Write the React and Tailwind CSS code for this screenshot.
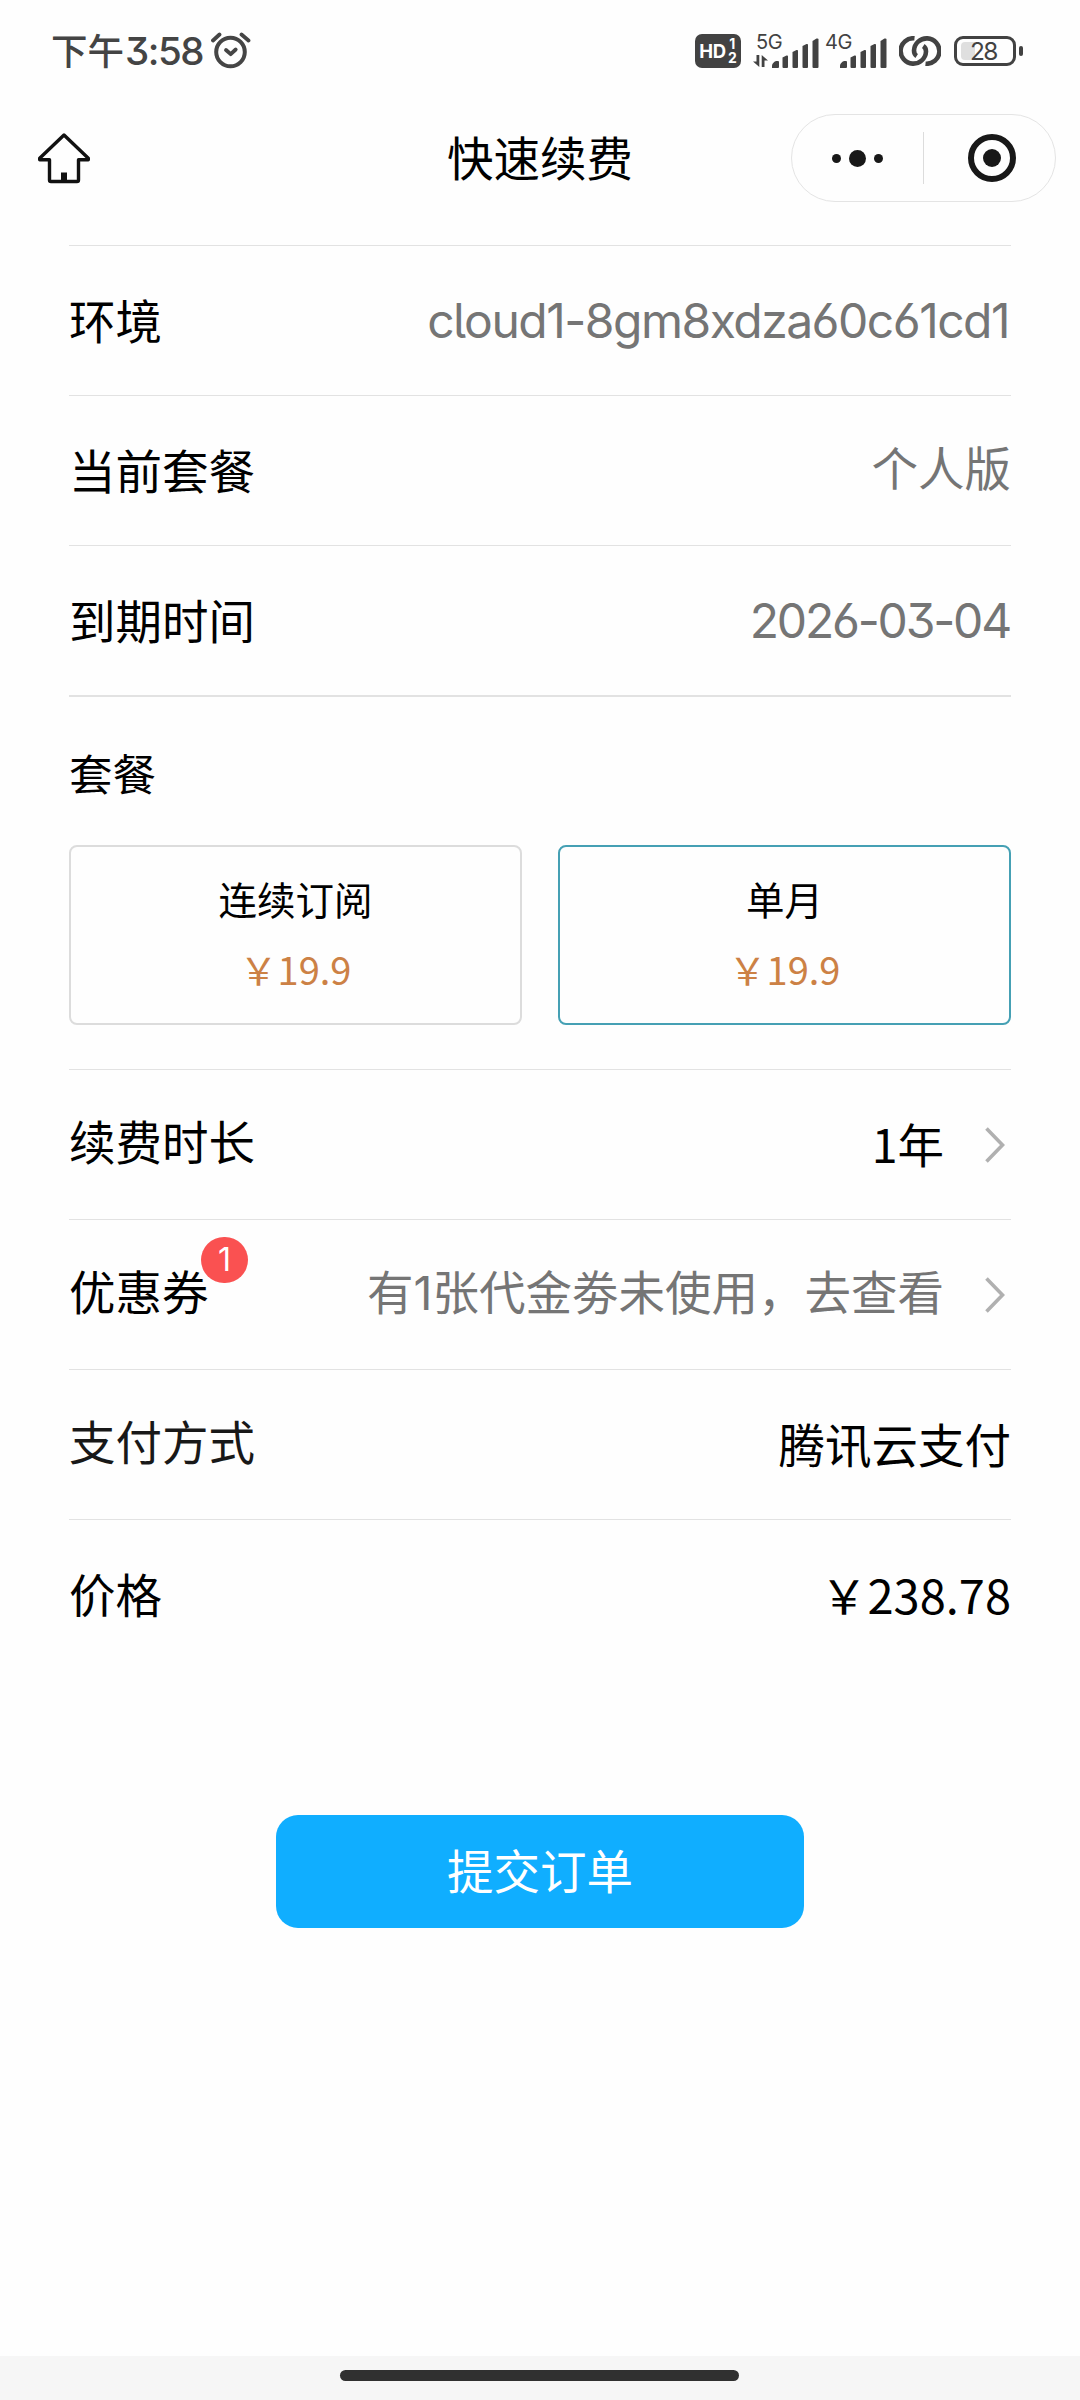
import React from "react";

const latin =
  "font-['Inter','Noto_Sans_CJK_SC',sans-serif] [font-feature-settings:'cv03','cv04','cv05','cv09']";

// Full-width yen sign
const YEN = "\uFFE5";

function AlarmIcon() {
  return (
    <svg width="40" height="38" viewBox="0 0 40 38" fill="none" stroke="#454545" strokeLinecap="round">
      <circle cx="19.5" cy="20" r="14.3" strokeWidth="4" />
      <path d="M15 18l4.700 4.200 5-4.700" strokeWidth="3.800" strokeLinejoin="round" />
      <path d="M2 8.500l6.500-6M30.500 2.500l7 6" strokeWidth="3.800" />
    </svg>
  );
}

function HdBadge() {
  return (
    <div className="flex h-[34px] w-[46px] items-center justify-center rounded-[7px] bg-[#424242] text-white">
      <span className="text-[18.500px] leading-none font-bold tracking-[-0.3px] font-['Inter',sans-serif]">HD</span>
      <span className="ml-[2px] flex flex-col text-center text-[14px] leading-[14px] font-bold font-['Inter',sans-serif]">
        <span>1</span>
        <span>2</span>
      </span>
    </div>
  );
}

function Bars() {
  return (
    <svg width="47" height="30" viewBox="0 0 47 30" fill="#424242">
      <path d="M0 30v-2.500q.500-3 4-4.500h2q1 0 1 1v5q0 1-1 1z" />
      <path d="M10.500 19.500l4-2q1.500-.5 1.500 1V29q0 1-1 1h-3.500q-1 0-1-1z" />
      <path d="M20.500 14l4-2q1.500-.5 1.500 1v16q0 1-1 1h-3.500q-1 0-1-1z" />
      <path d="M30.500 8l4-2q1.500-.5 1.500 1v22q0 1-1 1h-3.500q-1 0-1-1z" />
      <path d="M40.500 3l4-2.500Q46.500 0 46.500 1.500V29q0 1-1 1h-4q-1 0-1-1z" />
    </svg>
  );
}

function Signal({ label, arrows }) {
  return (
    <div className="relative flex h-[34px] items-end justify-end">
      <span
        className={`absolute top-[-2px] text-[20px] leading-[20px] tracking-[-0.5px] text-[#424242] font-['Inter',sans-serif] ${
          arrows ? "left-[3px]" : "left-0"
        }`}
      >
        {label}
      </span>
      {arrows && (
        <svg width="15" height="12" viewBox="0 0 15 12" className="mr-[4px] mb-[1px]" fill="#424242">
          <path d="M3.500 0h2.800v12L0 6.500h3.500zM8.700 0L15 5.500h-3.500V12H8.700z" />
        </svg>
      )}
      <Bars />
    </div>
  );
}

function LinkIcon() {
  return (
    <svg width="42" height="30" viewBox="0 0 42 30" fill="none" stroke="#424242" strokeWidth="4.600" strokeLinecap="butt">
      <path d="M15.500 2.300A12.700 12.700 0 1 0 27 15.500c0-3-1.200-4.500-2.700-5.500" />
      <path d="M26.500 27.700A12.700 12.700 0 1 0 15 14.500c0 3 1.200 4.500 2.700 5.500" />
    </svg>
  );
}

function Battery() {
  return (
    <div className="flex items-center gap-[3px]">
      <div className="flex h-[30px] w-[62px] items-center rounded-[9px] border-[3px] border-[#424242] p-[4px]">
        <div className="h-[18px] w-[14px] rounded-l-[4px] bg-[#dfdfdf]" />
        <span className="-ml-[5px] text-[24.500px] leading-none tracking-[-1.700px] text-[#424242] font-['Inter',sans-serif]">
          28
        </span>
      </div>
      <div className="h-[10px] w-[4px] rounded-[2px] bg-[#424242]" />
    </div>
  );
}

function StatusBar() {
  return (
    <div className="flex h-[102px] items-center justify-between pr-[57px] pl-[51px]">
      <div className="flex items-center text-[#444]">
        <span className="pb-[2px] text-[36.500px] leading-none font-medium font-['Noto_Sans_CJK_SC',sans-serif]">下午</span>
        <span className={`mr-[8px] ml-px text-[38.500px] leading-none font-medium tracking-[-1.500px] ${latin}`}>
          3:58
        </span>
        <AlarmIcon />
      </div>
      <div className="flex items-center">
        <HdBadge />
        <div className="ml-[12px] w-[66px]">
          <Signal label="5G" arrows />
        </div>
        <div className="ml-[6px] w-[62px]">
          <Signal label="4G" />
        </div>
        <div className="ml-[12px]">
          <LinkIcon />
        </div>
        <div className="ml-[13px]">
          <Battery />
        </div>
      </div>
    </div>
  );
}

function HomeIcon() {
  return (
    <svg width="52" height="51" viewBox="0 0 52 51" fill="none" stroke="#111" strokeWidth="3.400" strokeLinejoin="round">
      <path d="M26 2L1.700 25.200v1.500h9.800V47q0 1.500 1.500 1.500h26q1.500 0 1.500-1.500V26.700h9.800v-1.500z" />
      <path d="M23 39.500h6V48h-6z" fill="#111" stroke="none" />
    </svg>
  );
}

function NavBar() {
  return (
    <header className="grid h-[112px] grid-cols-[1fr_auto_1fr] items-center pr-[24px] pl-[38px]">
      <HomeIcon />
      <h1 className="mr-[14px] pb-[3px] text-[46.500px] leading-none font-normal text-black">快速续费</h1>
      <div className="flex h-[88px] w-[265px] items-center justify-self-end rounded-full border border-[#e4e4e4]">
        <div className="flex w-[131px] items-center justify-center gap-[8px]">
          <i className="size-[9px] rounded-full bg-[#181818]" />
          <i className="size-[17px] rounded-full bg-[#181818]" />
          <i className="size-[9px] rounded-full bg-[#181818]" />
        </div>
        <div className="h-[52px] w-px bg-[#dcdcdc]" />
        <div className="flex flex-1 justify-center pl-[4px]">
          <div className="flex size-[48px] items-center justify-center rounded-full border-[6px] border-[#181818]">
            <i className="size-[18px] rounded-full bg-[#181818]" />
          </div>
        </div>
      </div>
    </header>
  );
}

function Chevron() {
  return (
    <svg width="20" height="36" viewBox="0 0 20 36" fill="none" stroke="#b0b0b0" strokeWidth="3.600" className="mr-[6px] ml-[41px]">
      <path d="M1.500 1.500L17.500 18 1.500 34.500" />
    </svg>
  );
}

function Row({ label, badge, children, arrow }) {
  return (
    <div className="flex h-[150px] items-center justify-between border-t border-[#e2e2e2]">
      <div className="relative pb-[3px]">
        {label}
        {badge && (
          <span className="absolute top-[-30px] left-[132px] flex h-[46px] w-[47px] items-center justify-center rounded-full bg-[#fa5151] text-[32px] leading-none text-white font-['Inter',sans-serif]">
            {badge}
          </span>
        )}
      </div>
      <div className="flex items-center">
        {children}
        {arrow && <Chevron />}
      </div>
    </div>
  );
}

function Plan({ name, price, active }) {
  return (
    <div
      className={`flex h-[180px] flex-1 flex-col items-center rounded-[8px] border-2 pt-[28px] text-[38.500px] leading-[46px] ${
        active ? "border-[#45a0b4]" : "border-[#dcdcdc]"
      }`}
    >
      <div>{name}</div>
      <div className="mt-[25px] text-[38px] text-[#cc8145]">{price}</div>
    </div>
  );
}

export default function App() {
  return (
    <div
      lang="zh-CN"
      className="flex h-[2400px] w-[1080px] flex-col bg-[#fefefe] text-[46.500px] leading-none text-black font-['Noto_Sans_CJK_SC',sans-serif]"
    >
      <StatusBar />
      <NavBar />
      <main className="mt-[31px] flex flex-1 flex-col px-[69px]">
        <Row label="环境">
          <span className={`mr-[2px] text-[48px] tracking-[-1.500px] text-[#757575] ${latin}`}>
            cloud1-8gm8xdza60c61cd1
          </span>
        </Row>
        <Row label="当前套餐">
          <span className="pb-[8px] text-[#757575]">个人版</span>
        </Row>
        <Row label="到期时间">
          <span className={`mr-px text-[48px] tracking-[-2.200px] text-[#757575] ${latin}`}>2026-03-04</span>
        </Row>
        <section className="h-[374px] border-t-2 border-[#e2e2e2] pt-[54px]">
          <h2 className="text-[43.500px] leading-[44px] font-normal">套餐</h2>
          <div className="mt-[50px] flex gap-[36px]">
            <Plan name="连续订阅" price={`${YEN}19.9`} />
            <Plan name="单月" price={`${YEN}19.9`} active />
          </div>
        </section>
        <Row label={<div className="pb-[5px]">续费时长</div>} arrow>
          <span className="pb-[3px]">1年</span>
        </Row>
        <Row label={<div className="pb-[5px]">优惠券</div>} badge="1" arrow>
          <span className={`pb-[3px] text-[#757575] ${latin}`}>有1张代金劵未使用，去查看</span>
        </Row>
        <Row label={<div className="pb-[5px] text-[#181818]">支付方式</div>}>
          <span className="pb-[3px]">腾讯云支付</span>
        </Row>
        <Row label="价格">
          <span className="pb-[3px] text-[47px]">{YEN}238.78</span>
        </Row>
        <button className="mt-[146px] h-[113px] w-[528px] self-center rounded-[22px] bg-[#10aeff] pb-[4px] text-[46.500px] leading-none text-white">
          提交订单
        </button>
      </main>
      <footer className="flex h-[44px] justify-center bg-[#f6f6f6] pt-[14px] pr-[2px]">
        <div className="h-[11px] w-[399px] rounded-full bg-[#303030]" />
      </footer>
    </div>
  );
}
